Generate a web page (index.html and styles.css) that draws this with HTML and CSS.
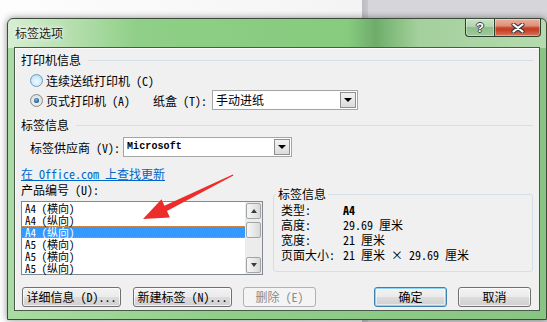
FILE: index.html
```html
<!DOCTYPE html>
<html lang="zh-CN">

<head>
    <meta charset="UTF-8">
    <title>标签选项</title>
    <link rel="stylesheet" href="styles.css">
</head>

<body>
    <div class="window">
        <div class="titlebar">
            <span class="title">标签选项</span>
            <div class="caption-btns">
                <span class="cap help">?</span>
                <span class="cap close">
                    <svg width="14" height="10" viewBox="0 0 14 10">
                        <path d="M2.5 1.5 L11.5 8.5 M11.5 1.5 L2.5 8.5" stroke="#3b3b3b" stroke-width="4.2" stroke-linecap="round" />
                        <path d="M2.5 1.5 L11.5 8.5 M11.5 1.5 L2.5 8.5" stroke="#fff" stroke-width="2.2" stroke-linecap="round" />
                    </svg>
                </span>
            </div>
        </div>

        <div class="client">
            <div class="group-head">打印机信息</div>
            <div class="radio-row">
                <span class="radio hot"></span>连续送纸打印机 (C)
            </div>
            <div class="radio-row">
                <span class="radio-wrap"><span class="radio checked"></span>页式打印机 (A)</span>
                <span class="tray-label">纸盒 (T):</span>
                <div class="combo combo-tray">
                    <span class="combo-text">手动进纸</span>
                    <span class="combo-btn"></span>
                </div>
            </div>

            <div class="group-head second">标签信息</div>
            <div class="vendor-row">
                <span class="vendor-label">标签供应商 (V):</span>
                <div class="combo combo-vendor">
                    <span class="combo-text mono">Microsoft</span>
                    <span class="combo-btn"></span>
                </div>
            </div>
            <div class="link-line"><a class="update-link" href="#">在 Office.com 上查找更新</a></div>

            <div class="product-row">
                <div class="product-col">
                    <div class="product-label">产品编号 (U):</div>
                    <div class="listbox">
                        <ul class="items">
                            <li>A4 (横向)</li>
                            <li>A4 (纵向)</li>
                            <li class="selected">A4 (纵向)</li>
                            <li>A5 (横向)</li>
                            <li>A5 (横向)</li>
                            <li>A5 (纵向)</li>
                        </ul>
                        <div class="scrollbar">
                            <span class="sb-btn up"></span>
                            <span class="sb-thumb"></span>
                            <span class="sb-space"></span>
                            <span class="sb-btn down"></span>
                        </div>
                    </div>
                </div>

                <fieldset class="label-info">
                    <legend>标签信息</legend>
                    <div class="info-row"><span class="info-key">类型:</span><span class="bold">A4</span></div>
                    <div class="info-row"><span class="info-key">高度:</span><span>29.69 厘米</span></div>
                    <div class="info-row"><span class="info-key">宽度:</span><span>21 厘米</span></div>
                    <div class="info-row"><span class="info-key">页面大小:</span><span>21 厘米 × 29.69 厘米</span></div>
                </fieldset>
            </div>

            <div class="button-row">
                <button class="btn wide first">详细信息 (D)...</button>
                <button class="btn wide second">新建标签 (N)...</button>
                <button class="btn third" disabled>删除 (E)</button>
                <button class="btn default">确定</button>
                <button class="btn last">取消</button>
            </div>
        </div>
    </div>

    <!-- red annotation arrow drawn over the dialog -->
    <svg class="arrow" width="547" height="322" viewBox="0 0 547 322">
        <polygon points="143,219 161.5,199.3 164.4,205.7 232.8,174.5 233.4,175.6 167,211.1 169.9,217.5" fill="#ec2d2a" />
    </svg>
</body>

</html>
```

FILE: styles.css
```css
body {
    margin: 0;
    padding: 18px 0 0 7px;
    height: 322px;
    box-sizing: border-box;
    overflow: hidden;
    font-family: "Noto Sans Mono CJK SC", "Noto Sans CJK SC", "Liberation Sans", sans-serif;
    font-size: 12px;
    color: #000;
    background: linear-gradient(to right, #fdfdfd 0, #f4f4f4 362px, #bdbdc1 362px, #c8c8cc 368px, #d6d6da 368px);
}

.window {
    width: 540px;
    box-sizing: border-box;
    border: 1px solid #3b4a3b;
    border-radius: 6px 6px 0 0;
    padding: 0 6px 8px 6px;
    box-shadow: 0 0 7px rgba(0, 0, 0, 0.45);
    background:
        linear-gradient(to right, #d7eed2 0, #b7e0b0 60px, #8fcf87 130px, #86cb7e 340px, #6fab6b 368px, #7db978 380px, #a3d09c 410px, #b5dbae 540px) top / 100% 29px no-repeat,
        linear-gradient(to right, #a9dca2, #8fcf88 40%, #88c583);
}

.titlebar {
    height: 28px;
    display: flex;
    justify-content: space-between;
    align-items: flex-start;
}

.title {
    font-family: "Noto Sans CJK SC", sans-serif;
    padding: 6px 0 0 1px;
    line-height: 16px;
    color: #1c1c1c;
    text-shadow: 0 0 6px rgba(255, 255, 255, 0.95), 0 0 3px rgba(255, 255, 255, 0.9);
}

.caption-btns {
    display: flex;
    margin-right: -1px;
}

.cap {
    height: 18px;
    display: flex;
    align-items: center;
    justify-content: center;
    border: 1px solid #2f3f2f;
    border-top: none;
    box-sizing: border-box;
    box-shadow: inset 0 0 0 1px rgba(255, 255, 255, 0.35);
}

.help {
    width: 29px;
    border-radius: 0 0 0 4px;
    border-right: none;
    background: linear-gradient(to bottom, #c9e2c6 0, #b2d4ae 45%, #8fbd8b 50%, #9fc99b 100%);
    font-family: "Liberation Sans", sans-serif;
    font-weight: bold;
    font-size: 13px;
    color: #fff;
    text-shadow: 1px 0 0 #404040, -1px 0 0 #404040, 0 1px 0 #404040, 0 -1px 0 #404040;
}

.close {
    width: 47px;
    border-radius: 0 0 4px 0;
    background: linear-gradient(to bottom, #eab0a2 0, #df8e78 40%, #c9452a 52%, #c44024 65%, #d8745c 100%);
}

.client {
    border: 1px solid #4c5a4c;
    background: #f0f0f0;
    padding: 0 6px 3px 6px;
    box-shadow: inset 1px 1px 0 #fff;
}

.group-head {
    display: flex;
    align-items: center;
    margin-top: 4px;
    height: 16px;
    line-height: 16px;
}

.group-head::after {
    content: "";
    flex: 1;
    height: 1px;
    margin-left: 7px;
    background: #d5dfe5;
}

.group-head.second {
    margin-top: 7px;
}

.radio-row {
    display: flex;
    align-items: center;
    height: 20px;
    padding-left: 9px;
}

.group-head + .radio-row {
    margin-top: 2px;
}

.radio-wrap {
    display: flex;
    align-items: center;
    width: 123px;
}

.radio {
    width: 13px;
    height: 13px;
    box-sizing: border-box;
    border-radius: 50%;
    border: 1px solid #8a8a8a;
    margin-right: 3px;
    position: relative;
    background: radial-gradient(circle at 50% 55%, #f4f4f4 0, #e3e3e3 60%, #d2d2d2 100%);
}

.radio.hot {
    border-color: #6a9ec4;
    background: radial-gradient(circle at 50% 60%, #f2f9fe 0, #d5ecfb 45%, #a7d3f2 100%);
}

.radio.checked::after {
    content: "";
    position: absolute;
    left: 3px;
    top: 3px;
    width: 5px;
    height: 5px;
    border-radius: 50%;
    background: radial-gradient(circle at 45% 40%, #7fc3ee 0, #2a6fa5 50%, #133553 100%);
}

.tray-label {
    width: 59px;
}

.combo {
    height: 20px;
    box-sizing: border-box;
    border: 1px solid #a5a5a5;
    background: #fff;
    display: flex;
    align-items: center;
    justify-content: space-between;
    padding: 0 1px 0 3px;
}

.combo-tray {
    width: 146px;
}

.combo-vendor {
    width: 169px;
}

.combo-text {
    line-height: 16px;
}

.mono {
    font-family: "Liberation Mono", monospace;
    font-size: 10px;
    font-weight: bold;
    letter-spacing: 0.1px;
}

.combo-btn {
    width: 16px;
    height: 16px;
    box-sizing: border-box;
    border: 1px solid #8f8f8f;
    background: linear-gradient(to bottom, #f2f2f2, #dcdcdc);
    position: relative;
}

.combo-btn::after {
    content: "";
    position: absolute;
    left: 3px;
    top: 5px;
    border-left: 4px solid transparent;
    border-right: 4px solid transparent;
    border-top: 4px solid #000;
}

.vendor-row {
    display: flex;
    align-items: center;
    height: 20px;
    margin-top: 4px;
    padding-left: 9px;
}

.vendor-label {
    width: 93px;
}

.link-line {
    margin-top: 9px;
    line-height: 16px;
}

.update-link {
    color: #0066cc;
    text-decoration: underline;
}

.product-row {
    display: flex;
    gap: 10px;
    margin-top: 0;
    align-items: flex-start;
}

.product-col {
    width: 242px;
}

.product-label {
    line-height: 16px;
}

.listbox {
    margin-top: 3px;
    height: 74px;
    box-sizing: border-box;
    border: 1px solid #828790;
    background: #fff;
    display: flex;
}

.items {
    list-style: none;
    margin: 0;
    padding: 0;
    flex: 1;
    font-size: 11px;
}

.items li {
    height: 12px;
    line-height: 12px;
    padding-left: 3px;
    box-sizing: border-box;
    white-space: nowrap;
}

.items li.selected {
    background: #3399ff;
    color: #fff;
    border-top: 1px dotted #d99350;
    border-bottom: 1px dotted #d99350;
    line-height: 10px;
}

.scrollbar {
    width: 17px;
    display: flex;
    flex-direction: column;
    padding: 1px 0;
    box-sizing: border-box;
    background: #ececec;
}

.sb-btn,
.sb-thumb {
    height: 16px;
    margin: 0 1px;
    box-sizing: border-box;
    border: 1px solid #a2a5a8;
    border-radius: 2px;
    background: linear-gradient(to right, #f6f6f6, #e6e6e6 60%, #d8d8d8);
    position: relative;
}

.sb-thumb {
    margin-top: 3px;
}

.sb-space {
    flex: 1;
}

.sb-btn::after {
    content: "";
    position: absolute;
    left: 4px;
    top: 5px;
    border-left: 3px solid transparent;
    border-right: 3px solid transparent;
}

.sb-btn.up::after {
    border-bottom: 4px solid #3a3a3a;
}

.sb-btn.down::after {
    border-top: 4px solid #3a3a3a;
}

.label-info {
    margin: 5px 0 0 0;
    width: 260px;
    box-sizing: border-box;
    padding: 1px 6px 9px 7px;
    border: 1px solid #d5dfe5;
    border-radius: 3px;
    min-width: 0;
}

.label-info legend {
    padding: 0 2px;
    margin-left: -5px;
    line-height: 14px;
}

.info-row {
    display: flex;
    line-height: 15px;
    height: 15px;
}

.info-key {
    width: 62px;
}

.bold {
    font-weight: bold;
}

.button-row {
    display: flex;
    margin-top: 12px;
}

.btn {
    height: 20px;
    padding: 0;
    font-family: inherit;
    font-size: 12px;
    color: #000;
    border: 1px solid #707070;
    border-radius: 3px;
    background: linear-gradient(to bottom, #f2f2f2 0, #ebebeb 50%, #dddddd 50%, #cfcfcf 100%);
    box-shadow: inset 0 0 0 1px rgba(255, 255, 255, 0.7);
    line-height: 16px;
}

.btn.wide {
    width: 99px;
}

.btn.first {
    margin-left: 1px;
}

.btn.second {
    margin-left: 12px;
}

.btn.third {
    width: 73px;
    margin-left: 11px;
    color: #8b8b8b;
    border-color: #adb2b5;
    background: #f4f4f4;
    box-shadow: none;
}

.btn.default {
    width: 73px;
    margin-left: auto;
    border-color: #3c7fb1;
    box-shadow: inset 0 0 0 1px #8ed4f7, inset 0 0 0 2px rgba(255, 255, 255, 0.5);
}

.btn.last {
    width: 73px;
    margin-left: 11px;
    margin-right: 2px;
}

.arrow {
    position: absolute;
    left: 0;
    top: 0;
    pointer-events: none;
}
```
